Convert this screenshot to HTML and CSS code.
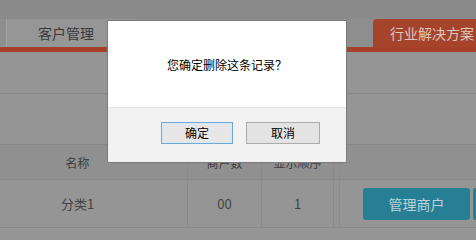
FILE: index.html
```html
<!DOCTYPE html>
<html lang="zh-CN">
<head>
<meta charset="utf-8">
<title>删除确认</title>
<link rel="stylesheet" href="styles.css">
</head>
<body>
<div class="page">
  <div class="topstrip"></div>
  <div class="tabs">
    <div class="tab tab-plain">客户管理</div>
    <div class="tab-spacer"></div>
    <div class="tab tab-active">行业解决方案</div>
  </div>
  <div class="tabline"></div>
  <div class="toolbar"></div>
  <div class="gap"></div>
  <div class="thead">
    <div class="cell c1">名称</div>
    <div class="cell c2">商户数</div>
    <div class="cell c3">显示顺序</div>
    <div class="cell c4"></div>
    <div class="cell c5"></div>
  </div>
  <div class="trow">
    <div class="cell c1">分类1</div>
    <div class="cell c2">00</div>
    <div class="cell c3">1</div>
    <div class="cell c4"></div>
    <div class="cell c5">
      <span class="btn-teal">管理商户</span>
      <span class="btn-teal btn-cut"></span>
    </div>
  </div>
</div>
<div class="dialog">
  <div class="dialog-body">您确定删除这条记录？</div>
  <div class="dialog-foot">
    <button class="dbtn dbtn-ok">确定</button>
    <button class="dbtn dbtn-cancel">取消</button>
  </div>
</div>
</body>
</html>
```
FILE: styles.css
```css
html, body {
  margin: 0;
  padding: 0;
}
html {
  overflow: hidden;
}
body {
  width: 476px;
  height: 234px;
  overflow: hidden;
  background: #959595;
  font-family: "Noto Sans CJK SC", "Noto Sans", sans-serif;
  position: relative;
}
.page {
  display: flex;
  flex-direction: column;
  width: 476px;
  overflow: hidden;
}
.topstrip {
  height: 19px;
  background: #8a8a8a;
}
.tabs {
  height: 28px;
  display: flex;
  align-items: stretch;
  background: #8e8e8e;
  padding-left: 6px;
}
.tab {
  font-size: 14px;
  line-height: 28px;
  white-space: nowrap;
  flex-shrink: 0;
}
.tab-plain {
  width: 130px;
  box-sizing: border-box;
  padding-left: 31px;
  background: #969696;
  border-left: 1px solid #a3a3a3;
  color: #3a3a3a;
}
.tab-spacer {
  width: 237px;
  flex-shrink: 0;
}
.tab-active {
  flex: 1;
  background: #a6442b;
  border-top-left-radius: 4px;
  color: #dcc6bf;
  padding-left: 17px;
  overflow: hidden;
}
.tabline {
  height: 5px;
  background: #a4412a;
}
.toolbar {
  height: 41px;
  border-bottom: 1px solid #878787;
}
.gap {
  height: 50px;
}
.thead, .trow {
  display: flex;
  border-top: 1px solid #888888;
}
.thead {
  height: 34px;
  background: #909090;
  color: #3e3e3e;
}
.trow {
  height: 47px;
  border-bottom: 1px solid #888888;
  color: #444444;
}
.cell {
  font-size: 12px;
  display: flex;
  align-items: center;
  justify-content: center;
  box-sizing: border-box;
  flex-shrink: 0;
}
.c1 {
  width: 188px;
  padding-right: 32px;
  border-right: 1px solid #8a8a8a;
}
.c2 {
  width: 74px;
  border-right: 1px solid #8a8a8a;
}
.c3 {
  width: 72px;
  border-right: 1px solid #8a8a8a;
}
.c4 {
  width: 6px;
  border-right: 1px solid #8c8c8c;
}
.c5 {
  flex: 1 0 auto;
  justify-content: flex-start;
  gap: 3px;
  padding-left: 23px;
}
.trow .c1, .trow .c2, .trow .c3 {
  font-size: 13px;
}
.btn-teal {
  flex: none;
  width: 107px;
  height: 32px;
  border-radius: 3px;
  background: #267f95;
  color: #bcd2d8;
  font-size: 14px;
  line-height: 32px;
  text-align: center;
}
.btn-cut {
  width: 20px;
}
.dialog {
  position: absolute;
  left: 107px;
  top: 20px;
  width: 240px;
  height: 143px;
  box-sizing: border-box;
  border: 1px solid #7a7a7a;
  border-radius: 0 0 3px 3px;
  background: #ffffff;
  display: flex;
  flex-direction: column;
  overflow: hidden;
}
.dialog-body {
  height: 86px;
  display: flex;
  align-items: center;
  justify-content: center;
  font-size: 12px;
  color: #000000;
}
.dialog-foot {
  flex: 1;
  background: #f2f2f2;
  border-top: 1px solid #e6e6e6;
  display: flex;
  justify-content: flex-end;
  align-items: flex-start;
  gap: 13px;
  padding: 14px 26px 0 0;
}
.dbtn {
  height: 22px;
  margin: 0;
  padding: 0;
  font-family: "Noto Sans CJK SC", "Noto Sans", sans-serif;
  font-size: 12px;
  color: #000000;
  line-height: 20px;
  border-radius: 0;
}
.dbtn-ok {
  width: 72px;
  background: #e7e7e7;
  border: 1px solid #6fa9dc;
  box-shadow: inset 0 0 0 1px #d6e8f7;
}
.dbtn-cancel {
  width: 74px;
  background: #e3e3e3;
  border: 1px solid #ababab;
}
```
